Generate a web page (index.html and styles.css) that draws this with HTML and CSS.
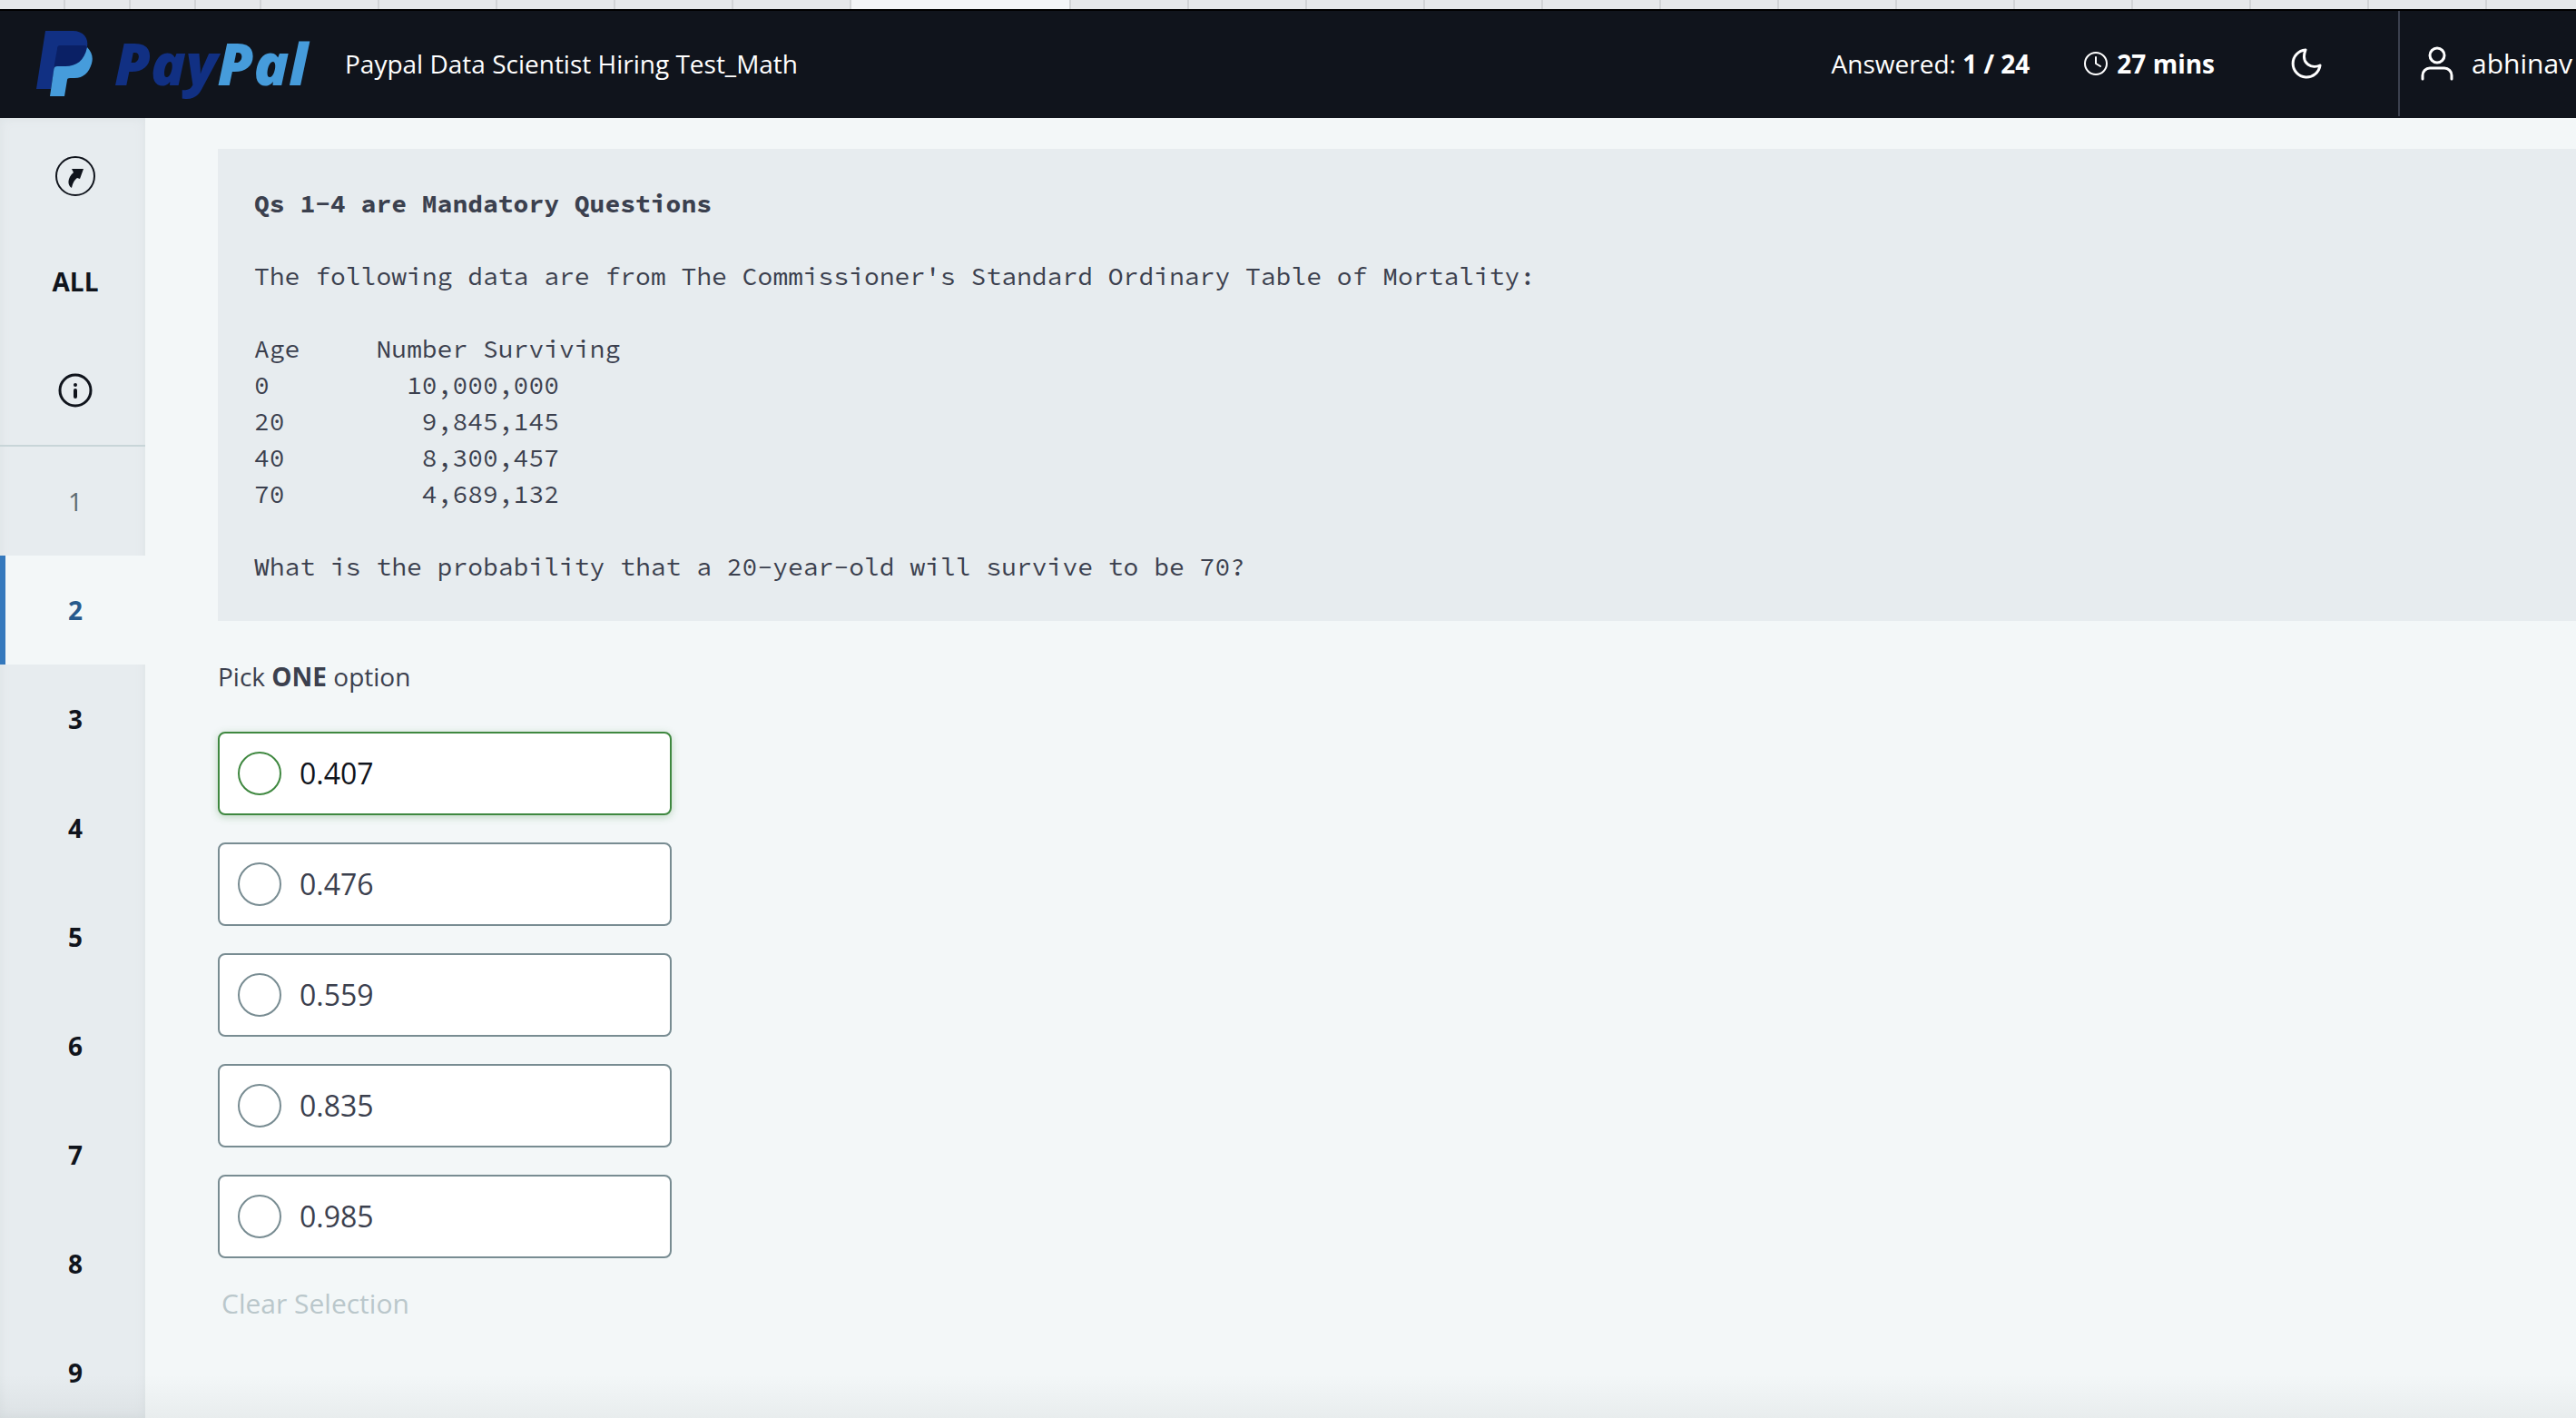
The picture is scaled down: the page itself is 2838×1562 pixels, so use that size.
FILE: index.html
```html
<!DOCTYPE html>
<html lang="en">
<head>
<meta charset="utf-8">
<meta name="viewport" content="width=device-width, initial-scale=1">
<title>Paypal Data Scientist Hiring Test_Math</title>
<link rel="stylesheet" href="styles.css">
</head>
<body>
<div class="app">
  <div class="tab-strip" aria-hidden="true">
    <span class="tab tab-pinned"></span><span class="tab tab-pinned"></span><span class="tab tab-pinned"></span><span class="tab tab-pinned"></span>
    <span class="tab"></span><span class="tab"></span><span class="tab"></span><span class="tab"></span><span class="tab"></span>
    <span class="tab tab-active"></span>
    <span class="tab"></span><span class="tab"></span><span class="tab"></span><span class="tab"></span><span class="tab"></span><span class="tab"></span>
    <span class="tab"></span><span class="tab"></span><span class="tab"></span><span class="tab"></span><span class="tab"></span><span class="tab"></span>
    <span class="tab tab-rest"></span>
  </div>

  <header class="topbar">
    <div class="brand">
      <svg class="brand-mark" viewBox="0 0 62 72" aria-hidden="true">
        <path fill="#113083" d="M10 0H40C52 0 58 8 56 18C53 32 44 40 30 40H20L16 64H0Z"/>
        <path fill="#469cdb" d="M56 18C61 23 63 29 61 36C58 46 52 52 42 52H37Q34 52 34 54L31 72H15L20 38L32 28Z"/>
        <path fill="#0a2065" d="M26 16H54L56 18C53 33 44 39 32 39H23C21 39 20 40 19 42L23 20C23 17 24 16 26 16Z"/>
      </svg>
      <span class="brand-word"><span class="brand-pay">Pay</span><span class="brand-pal">Pal</span></span>
    </div>
    <h1 class="test-title">Paypal Data Scientist Hiring Test_Math</h1>
    <div class="status">
      <span>Answered: <b>1 / 24</b></span>
      <span class="timer">
        <svg class="icon-clock" viewBox="0 0 26 26" aria-hidden="true"><circle cx="13" cy="13" r="12"/><path d="M13 6V13L18 16"/></svg>
        <b>27 mins</b>
      </span>
      <button class="theme-button" type="button" aria-label="Dark mode">
        <svg class="icon-moon" viewBox="0 0 34 34" aria-hidden="true"><path d="M16 2A15 15 0 1 0 32 19C24 23 10 18 16 2Z"/></svg>
      </button>
    </div>
    <button class="user" type="button">
      <svg class="icon-user" viewBox="0 0 36 38" aria-hidden="true"><circle cx="18" cy="10" r="8"/><path d="M2 36V32A8 8 0 0 1 10 24H26A8 8 0 0 1 34 32V36"/></svg>
      <span>abhinav</span>
    </button>
  </header>

  <div class="workspace">
    <nav class="sidebar" aria-label="Questions">
      <a class="nav-item" href="#back" aria-label="Back to test">
        <svg class="icon-back" viewBox="0 0 44 52" aria-hidden="true"><circle cx="22" cy="30" r="21" fill="none" stroke="#10141c" stroke-width="2"/><path fill="#10141c" d="M18 22H31L27 33L24 32C20 35 19 39 18 43C13 40 13 32 20 26Z"/></svg>
      </a>
      <a class="nav-item" href="#all">ALL</a>
      <a class="nav-item" href="#info" aria-label="Information">
        <svg class="icon-info" viewBox="0 0 38 38" aria-hidden="true"><circle cx="19" cy="19" r="17" fill="none" stroke="#10141c" stroke-width="3"/><circle cx="19" cy="13" r="2" fill="#10141c"/><path d="M19 19V26" stroke="#10141c" stroke-width="4" stroke-linecap="round"/></svg>
      </a>
      <div class="questions">
        <a class="nav-item is-answered" href="#q1">1</a>
        <a class="nav-item is-current" href="#q2" aria-current="page">2</a>
        <a class="nav-item" href="#q3">3</a>
        <a class="nav-item" href="#q4">4</a>
        <a class="nav-item" href="#q5">5</a>
        <a class="nav-item" href="#q6">6</a>
        <a class="nav-item" href="#q7">7</a>
        <a class="nav-item" href="#q8">8</a>
        <a class="nav-item" href="#q9">9</a>
      </div>
    </nav>

    <main class="content">
<pre class="problem"><b>Qs 1-4 are Mandatory Questions</b>

The following data are from The Commissioner's Standard Ordinary Table of Mortality:

Age     Number Surviving
0         10,000,000
20         9,845,145
40         8,300,457
70         4,689,132

What is the probability that a 20-year-old will survive to be 70?</pre>
      <form>
        <fieldset class="options">
          <legend class="prompt">Pick <b>ONE</b> option</legend>
          <label class="option is-hovered"><input class="radio" type="radio" name="answer" value="0.407">0.407</label>
          <label class="option"><input class="radio" type="radio" name="answer" value="0.476">0.476</label>
          <label class="option"><input class="radio" type="radio" name="answer" value="0.559">0.559</label>
          <label class="option"><input class="radio" type="radio" name="answer" value="0.835">0.835</label>
          <label class="option"><input class="radio" type="radio" name="answer" value="0.985">0.985</label>
        </fieldset>
        <button class="clear" type="reset" disabled>Clear Selection</button>
      </form>
    </main>
  </div>
  <div class="bottom-fade"></div>
</div>
</body>
</html>
```
FILE: styles.css
```css
* {
  box-sizing: border-box;
}

body {
  margin: 0;
  font: 28px/40px "Open Sans", "Noto Sans", sans-serif;
  color: #3b404e;
  background: #f3f7f8;
}

button {
  padding: 0;
  border: 0;
  background: none;
  font: inherit;
  color: inherit;
}

svg {
  display: block;
  flex: none;
}

.app {
  position: relative;
  display: flex;
  flex-direction: column;
  height: 100vh;
  overflow: hidden;
}

/* Browser tab strip */
.tab-strip {
  display: flex;
  flex: none;
  height: 10px;
  overflow: hidden;
  background: #e6e8ea;
}

.tab {
  flex: none;
  width: 130px;
  border-right: 2px solid #d2d4d6;
}

.tab-pinned {
  width: 72px;
}

.tab-active {
  width: 242px;
  background: #f3f5f7;
}

.tab-rest {
  flex: 1;
  border: 0;
}

/* Top bar */
.topbar {
  display: flex;
  flex: none;
  align-items: center;
  height: 120px;
  border-top: 2px solid #000;
  padding: 0 0 2px 40px;
  background: #10141c;
  color: #fff;
}

.brand {
  display: flex;
  align-items: center;
  gap: 24px;
  width: 340px;
}

.brand-mark {
  width: 62px;
  height: 72px;
}

.brand-word {
  font-size: 64px;
  font-weight: 800;
  font-style: italic;
  line-height: 72px;
}

.brand-pay {
  color: #113083;
}

.brand-pal {
  color: #469cdb;
}

.test-title {
  margin: 0;
  font: inherit;
}

.status {
  display: flex;
  align-items: center;
  margin-left: auto;
  gap: 60px;
}

.timer {
  display: flex;
  align-items: center;
  gap: 10px;
}

.topbar svg {
  fill: none;
  stroke: #fff;
  stroke-width: 3;
  stroke-linecap: round;
  stroke-linejoin: round;
}

.topbar .brand-mark {
  stroke: none;
}

.topbar .icon-clock {
  width: 26px;
  height: 26px;
  stroke-width: 2;
}

.theme-button {
  padding: 0 84px 0 24px;
}

.icon-moon {
  width: 34px;
  height: 34px;
}

.user {
  display: flex;
  align-items: center;
  align-self: stretch;
  gap: 20px;
  width: 196px;
  padding-left: 23px;
  border-left: 2px solid #3b404e;
  font-size: 30px;
}

.icon-user {
  width: 36px;
  height: 38px;
}

/* Question navigation */
.workspace {
  display: flex;
  flex: 1;
  min-height: 0;
}

.sidebar {
  flex: none;
  width: 160px;
  overflow: hidden;
  background: #e7ecef;
  box-shadow: inset 0 0 12px #dce2e5;
}

.nav-item {
  display: flex;
  align-items: center;
  justify-content: center;
  height: 120px;
  border-left: 6px solid transparent;
  font-weight: 700;
  color: #10141c;
  text-decoration: none;
}

.questions {
  border-top: 2px solid #c8d5d8;
}

.nav-item.is-answered {
  font-weight: 400;
  color: #5e6a70;
}

.nav-item.is-current {
  border-color: #3579bd;
  background: #f3f7f8;
  color: #285a8c;
}

.icon-back {
  width: 44px;
  height: 52px;
}

.icon-info {
  width: 38px;
  height: 38px;
}

/* Question */
.content {
  flex: 1;
  min-width: 0;
  padding: 34px 0 0 80px;
}

.problem {
  margin: 0;
  padding: 40px;
  background: #e7ecef;
  font: 28px/40px "Source Code Pro", "Liberation Mono", monospace;
}

.options {
  display: flex;
  flex-direction: column;
  gap: 30px;
  width: 500px;
  margin: 0;
  padding: 0;
  border: 0;
}

.prompt {
  padding: 41px 0;
}

.option {
  display: flex;
  align-items: center;
  gap: 20px;
  height: 92px;
  padding: 0 20px;
  border: 2px solid #788c92;
  border-radius: 8px;
  background: #fff;
  font-size: 32px;
}

.radio {
  appearance: none;
  width: 48px;
  height: 48px;
  margin: 0;
  border: 2px solid #788c92;
  border-radius: 50%;
}

.is-hovered {
  border-color: #3f8840;
  box-shadow: 0 2px 8px rgba(63, 136, 64, 0.3);
  color: #10141c;
}

.is-hovered .radio {
  border-color: #3f8840;
}

.clear {
  margin-top: 30px;
  padding: 0 4px;
  font-size: 30px;
  color: #bac7cb;
}

.bottom-fade {
  position: absolute;
  inset: auto 0 0;
  height: 48px;
  background: linear-gradient(transparent, rgba(60, 70, 70, 0.06));
  pointer-events: none;
}
```
